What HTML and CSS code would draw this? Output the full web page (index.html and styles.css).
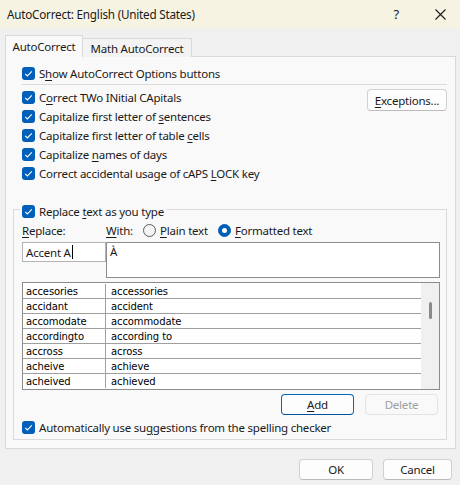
FILE: index.html
```html
<!DOCTYPE html>
<html>
<head>
<meta charset="utf-8">
<title>AutoCorrect</title>
<link rel="stylesheet" href="styles.css">
</head>
<body>
<div class="titlebar">
  <span class="title">AutoCorrect: English (United States)</span>
  <span class="help">?</span>
  <span class="close"><svg width="11" height="11" viewBox="0 0 11 11"><path d="M0.5 0.5L10.5 10.5M10.5 0.5L0.5 10.5" stroke="#1a1a1a" stroke-width="1.1" fill="none"/></svg></span>
</div>
<div class="tabs">
  <div class="tab active">AutoCorrect</div>
  <div class="tab">Math AutoCorrect</div>
</div>
<div class="panel">
  <div class="check-row top-row"><span class="cb"><svg width="13" height="13" viewBox="0 0 13 13"><path d="M3.2 6.8L5.4 9L9.8 4.4" stroke="#fff" stroke-width="1.1" fill="none"/></svg></span><span>S<u>h</u>ow AutoCorrect Options buttons</span></div>
  <div class="sep"></div>
  <div class="options">
    <div class="opt-list">
      <div class="check-row"><span class="cb"><svg width="13" height="13" viewBox="0 0 13 13"><path d="M3.2 6.8L5.4 9L9.8 4.4" stroke="#fff" stroke-width="1.1" fill="none"/></svg></span><span>C<u>o</u>rrect TWo INitial CApitals</span></div>
      <div class="check-row"><span class="cb"><svg width="13" height="13" viewBox="0 0 13 13"><path d="M3.2 6.8L5.4 9L9.8 4.4" stroke="#fff" stroke-width="1.1" fill="none"/></svg></span><span>Capitalize first letter of <u>s</u>entences</span></div>
      <div class="check-row"><span class="cb"><svg width="13" height="13" viewBox="0 0 13 13"><path d="M3.2 6.8L5.4 9L9.8 4.4" stroke="#fff" stroke-width="1.1" fill="none"/></svg></span><span>Capitalize first letter of table <u>c</u>ells</span></div>
      <div class="check-row"><span class="cb"><svg width="13" height="13" viewBox="0 0 13 13"><path d="M3.2 6.8L5.4 9L9.8 4.4" stroke="#fff" stroke-width="1.1" fill="none"/></svg></span><span>Capitalize <u>n</u>ames of days</span></div>
      <div class="check-row"><span class="cb"><svg width="13" height="13" viewBox="0 0 13 13"><path d="M3.2 6.8L5.4 9L9.8 4.4" stroke="#fff" stroke-width="1.1" fill="none"/></svg></span><span>Correct accidental usage of cAPS <u>L</u>OCK key</span></div>
    </div>
    <div class="btn exc"><u>E</u>xceptions...</div>
  </div>
  <fieldset class="group">
    <legend class="legend"><span class="cb"><svg width="13" height="13" viewBox="0 0 13 13"><path d="M3.2 6.8L5.4 9L9.8 4.4" stroke="#fff" stroke-width="1.1" fill="none"/></svg></span><span>Replace <u>t</u>ext as you type</span></legend>
    <div class="labels">
      <span class="lbl-replace"><u>R</u>eplace:</span>
      <span class="lbl-with"><u>W</u>ith:</span>
      <span class="radio-opt plain"><span class="radio"></span><span><u>P</u>lain text</span></span>
      <span class="radio-opt"><span class="radio on"><span class="dot"></span></span><span><u>F</u>ormatted text</span></span>
    </div>
    <div class="inputs">
      <div class="replace-box">Accent A<span class="caret"></span></div>
      <div class="with-box">À</div>
    </div>
    <div class="list">
      <div class="rows">
        <div class="row"><span class="c1">accesories</span><span class="c2">accessories</span></div>
        <div class="row"><span class="c1">accidant</span><span class="c2">accident</span></div>
        <div class="row"><span class="c1">accomodate</span><span class="c2">accommodate</span></div>
        <div class="row"><span class="c1">accordingto</span><span class="c2">according to</span></div>
        <div class="row"><span class="c1">accross</span><span class="c2">across</span></div>
        <div class="row"><span class="c1">acheive</span><span class="c2">achieve</span></div>
        <div class="row last"><span class="c1">acheived</span><span class="c2">achieved</span></div>
      </div>
      <div class="scrollbar"><div class="thumb"></div></div>
    </div>
    <div class="list-btns">
      <div class="btn add"><u>A</u>dd</div>
      <div class="btn disabled">Delete</div>
    </div>
    <div class="check-row auto"><span class="cb"><svg width="13" height="13" viewBox="0 0 13 13"><path d="M3.2 6.8L5.4 9L9.8 4.4" stroke="#fff" stroke-width="1.1" fill="none"/></svg></span><span>Automatically use su<u>g</u>gestions from the spelling checker</span></div>
  </fieldset>
</div>
<div class="footer">
  <div class="btn ok">OK</div>
  <div class="btn cancel">Cancel</div>
</div>
</body>
</html>
```

FILE: styles.css
```css
* { box-sizing: border-box; }
html, body { margin: 0; padding: 0; }
body {
  width: 460px;
  height: 485px;
  overflow: hidden;
  background: #f0f0f0;
  font-family: "Noto Sans", "Open Sans", sans-serif;
  font-size: 11.5px;
  letter-spacing: -0.22px;
  color: #1a1a1a;
}
u { text-underline-offset: 2px; }

.titlebar {
  height: 28px;
  background: #f7f3e2;
  display: flex;
  align-items: center;
  padding: 0 14px 0 7px;
}
.title { flex: 1; font-size: 11.7px; }
.help { margin-right: 36px; font-size: 13px; }
.close { display: flex; }

.tabs {
  display: flex;
  align-items: flex-end;
  height: 22px;
  margin-top: 7px;
  padding-left: 5px;
}
.tab {
  height: 19px;
  width: 109px;
  display: flex;
  align-items: center;
  justify-content: center;
  border: 1px solid #d9d9d9;
  border-left: none;
  border-bottom: none;
  background: #f3f3f3;
}
.tab.active {
  height: 22px;
  width: 78px;
  border-left: 1px solid #d9d9d9;
  background: #f9f9f9;
  position: relative;
  z-index: 1;
}

.panel {
  margin: -1px 0 0 5px;
  width: 451px;
  background: #f9f9f9;
  border: 1px solid #d9d9d9;
  padding: 0 8px 8px 7px;
}

.check-row {
  display: flex;
  align-items: center;
  height: 19px;
  gap: 4px;
  white-space: nowrap;
}
.cb {
  width: 13px;
  height: 13px;
  border-radius: 3px;
  background: #005fb8;
  display: flex;
  flex: none;
}
.top-row { margin: 7px 0 0 9px; }
.sep { height: 1px; background: #dadada; margin: 1px 0 0 9px; }

.options {
  display: flex;
  justify-content: space-between;
  align-items: flex-start;
  margin: 3px 0 0 9px;
}
.btn {
  display: flex;
  align-items: center;
  justify-content: center;
  height: 21px;
  background: #fdfdfd;
  border: 1px solid #d0d0d0;
  border-bottom-color: #bcbcbc;
  border-radius: 4px;
}
.exc { width: 80px; height: 22px; margin-top: 1px; }

.group {
  margin: 15px 0 0 0;
  border: 1px solid #dadada;
  padding: 0 6px 2px 8px;
  min-width: 0;
}
.legend {
  display: flex;
  align-items: center;
  gap: 4px;
  height: 23px;
  padding: 4px 2px 0 2px;
  margin-left: -2px;
  white-space: nowrap;
}

.labels {
  display: flex;
  align-items: center;
  height: 19px;
  white-space: nowrap;
}
.lbl-replace { width: 84px; }
.lbl-with { width: 37px; }
.radio-opt { display: flex; align-items: center; gap: 4px; }
.radio-opt.plain { width: 75px; }
.radio {
  width: 13px;
  height: 13px;
  border-radius: 50%;
  border: 1px solid #5c5c5c;
  background: #f4f4f4;
  display: flex;
  align-items: center;
  justify-content: center;
  flex: none;
}
.radio.on { background: #005fb8; border-color: #005fb8; }
.dot { width: 5px; height: 5px; border-radius: 50%; background: #fff; }

.inputs {
  display: flex;
  align-items: flex-start;
  margin-top: 2px;
  height: 36px;
}
.replace-box {
  width: 84px;
  height: 20px;
  background: #fff;
  border: 1px solid #b4b4b4;
  padding-left: 3px;
  display: flex;
  align-items: center;
  white-space: nowrap;
}
.caret { width: 1px; height: 14px; background: #000; margin-left: 1px; }
.with-box {
  flex: 1;
  height: 36px;
  background: #fff;
  border: 1px solid #8c8c8c;
  padding: 1px 3px;
}

.list {
  display: flex;
  margin-top: 4px;
  height: 108px;
  border: 1px solid #8c8c8c;
  background: #fff;
  font-family: "DejaVu Sans", Verdana, sans-serif;
  font-size: 10px;
  letter-spacing: -0.1px;
  color: #000;
}
.rows { flex: 1; padding-top: 1px; }
.row {
  display: flex;
  height: 15px;
  border-bottom: 1px solid #a0a0a0;
  align-items: center;
}
.row.last { border-bottom-color: transparent; }
.c1 { width: 83px; height: 100%; padding-left: 3px; border-right: 1px solid #a0a0a0; display: flex; align-items: center; }
.c2 { padding-left: 5px; }
.scrollbar {
  width: 18px;
  background: #f0f0f0;
  display: flex;
  justify-content: center;
  padding-top: 19px;
}
.thumb { width: 3px; height: 17px; border-radius: 2px; background: #8a8a8a; }

.list-btns {
  display: flex;
  justify-content: flex-end;
  gap: 11px;
  margin: 4px 2px 0 0;
}
.add { width: 73px; border-color: #0067c0; border-bottom-color: #0050a0; }
.disabled { width: 73px; color: #a0a0a0; border-color: #e3e3e3; background: #f9f9f9; }
.auto { margin-top: 3px; }

.footer {
  display: flex;
  justify-content: flex-end;
  gap: 10px;
  padding-right: 8px;
  margin-top: 10px;
}
.ok { width: 74px; }
.cancel { width: 69px; }
```
